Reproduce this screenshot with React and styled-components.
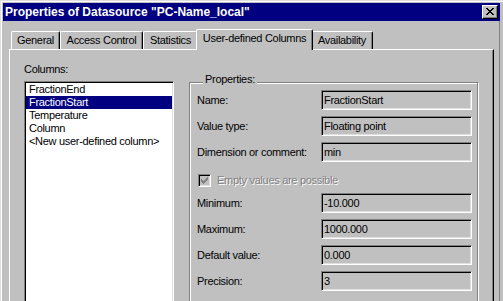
import React from 'react';
import styled, { createGlobalStyle } from 'styled-components';

const GlobalStyle = createGlobalStyle`
  html, body {
    margin: 0;
    padding: 0;
    background: #c0c0c0;
  }
  body {
    font-family: "Liberation Sans", Arial, sans-serif;
    font-size: 11px;
    letter-spacing: -0.3px;
    color: #000;
  }
`;

// Window frame
const Window = styled.div`
  width: 503px;
  height: 301px;
  box-sizing: border-box;
  overflow: hidden;
  background: #c0c0c0;
  border-top: 1px solid #dfdfdf;
  border-left: 1px solid #dfdfdf;
  box-shadow: inset 1px 1px 0 #fff;
  padding: 2px 3px 0 2px;
  display: flex;
  flex-direction: column;
`;

const TitleBar = styled.div`
  height: 18px;
  flex-shrink: 0;
  background: #000080;
  display: flex;
  align-items: center;
  justify-content: space-between;
  padding: 0 2px;
`;

const Title = styled.span`
  color: #fff;
  font-weight: bold;
  font-size: 12px;
  letter-spacing: 0;
  white-space: nowrap;
`;

const CloseButton = styled.div`
  width: 16px;
  height: 14px;
  box-sizing: border-box;
  background: #c0c0c0;
  border: 1px solid;
  border-color: #fff #000 #000 #fff;
  box-shadow: inset -1px -1px 0 #808080;
  display: flex;
  align-items: center;
  justify-content: center;
  padding: 0 1px 1px 0;
`;

const Client = styled.div`
  flex: 1;
  display: flex;
  flex-direction: column;
  border-right: 1px solid #808080;
`;

// Tabs
const TabRow = styled.div`
  display: flex;
  align-items: flex-end;
  height: 20px;
  margin: 8px 0 0 8px;
`;

const Tab = styled.div`
  position: relative;
  z-index: ${p => (p.$active ? 1 : 0)};
  box-sizing: border-box;
  width: ${p => p.$w}px;
  height: ${p => (p.$active ? 21 : 18)}px;
  margin: ${p => (p.$active ? '0 -2px -1px' : '0')};
  background: #c0c0c0;
  border-top: 1px solid #fff;
  border-left: 1px solid #fff;
  border-right: 1px solid #000;
  border-radius: 2px 2px 0 0;
  box-shadow: inset -1px 0 0 #808080;
  padding-top: 2px;
  line-height: 13px;
  text-align: center;
  white-space: nowrap;
`;

const Panel = styled.div`
  flex: 1;
  width: 485px;
  box-sizing: border-box;
  margin-left: 6px;
  border-top: 1px solid #fff;
  border-left: 1px solid #fff;
  border-right: 1px solid #000;
  box-shadow: inset -1px 0 0 #808080;
  padding: 13px 15px 0 14px;
  display: flex;
  align-items: flex-start;
  gap: 15px;
`;

// Left list
const ColumnsPane = styled.div`
  width: 150px;
  display: flex;
  flex-direction: column;
`;

const Label = styled.div`
  line-height: 13px;
  white-space: nowrap;
`;

const ColumnsLabel = styled(Label)`
  margin-bottom: 5px;
`;

const ListBox = styled.div`
  height: 240px;
  box-sizing: border-box;
  background: #fff;
  border: 1px solid;
  border-color: #808080 #fff #fff #808080;
  box-shadow: inset 1px 1px 0 #000, inset -1px -1px 0 #dfdfdf;
  padding: 1px;
`;

const ListItem = styled.div`
  line-height: 13px;
  padding-left: 3px;
  white-space: nowrap;
  background: ${p => (p.$selected ? '#000080' : 'transparent')};
  color: ${p => (p.$selected ? '#fff' : '#000')};
`;

// Properties group
const GroupBox = styled.div`
  width: 289px;
  box-sizing: border-box;
  margin-top: 19px;
  border: 1px solid #808080;
  box-shadow: inset 1px 1px 0 #fff, 1px 1px 0 #fff;
  padding: 0 5px 14px 7px;
  display: flex;
  flex-direction: column;
`;

const GroupTitle = styled.div`
  align-self: flex-start;
  margin: -10px 0 4px 6px;
  padding: 0 2px;
  background: #c0c0c0;
  line-height: 13px;
`;

const FieldRow = styled.div`
  display: grid;
  grid-template-columns: 124px 151px;
  align-items: center;
  height: 20px;
  margin-bottom: 6px;
`;

const Field = styled.div`
  height: 20px;
  box-sizing: border-box;
  background: #c0c0c0;
  border: 1px solid;
  border-color: #808080 #fff #fff #808080;
  box-shadow: inset 1px 1px 0 #000, inset -1px -1px 0 #dfdfdf;
  padding-left: 2px;
  line-height: 18px;
  white-space: nowrap;
`;

const CheckRow = styled.div`
  height: 25px;
  display: flex;
  align-items: center;
  gap: 6px;
  padding-left: 1px;
`;

const CheckBox = styled.div`
  width: 13px;
  height: 13px;
  box-sizing: border-box;
  background: #c0c0c0;
  border: 1px solid;
  border-color: #808080 #fff #fff #808080;
  box-shadow: inset 1px 1px 0 #000, inset -1px -1px 0 #dfdfdf;
  display: flex;
  align-items: center;
  justify-content: center;
`;

const DisabledText = styled.span`
  color: #808080;
  text-shadow: 1px 1px 0 #fff;
  line-height: 13px;
`;

const CLOSE_X = [
  'XX....XX',
  '.XX..XX.',
  '..XXXX..',
  '...XX...',
  '..XXXX..',
  '.XX..XX.',
  'XX....XX',
];

const CHECK = [
  '......X',
  '.....XX',
  'X...XXX',
  'XX.XXX.',
  'XXXXX..',
  '.XXX...',
  '..X....',
];

const PixelIcon = ({ rows, color }) => (
  <svg width={rows[0].length} height={rows.length} shapeRendering="crispEdges">
    {rows.flatMap((row, y) =>
      row.split('').map((c, x) =>
        c === 'X' ? <rect key={`${x}-${y}`} x={x} y={y} width="1" height="1" fill={color} /> : null
      )
    )}
  </svg>
);

const tabs = [
  { label: 'General', w: 49 },
  { label: 'Access Control', w: 83 },
  { label: 'Statistics', w: 55 },
  { label: 'User-defined Columns', w: 117, active: true },
  { label: 'Availability', w: 62 },
];

const columns = ['FractionEnd', 'FractionStart', 'Temperature', 'Column', '<New user-defined column>'];

const topFields = [
  ['Name:', 'FractionStart'],
  ['Value type:', 'Floating point'],
  ['Dimension or comment:', 'min'],
];

const bottomFields = [
  ['Minimum:', '-10.000'],
  ['Maximum:', '1000.000'],
  ['Default value:', '0.000'],
  ['Precision:', '3'],
];

const App = () => (
  <>
    <GlobalStyle />
    <Window>
      <TitleBar>
        <Title>Properties of Datasource "PC-Name_local"</Title>
        <CloseButton>
          <PixelIcon rows={CLOSE_X} color="#000" />
        </CloseButton>
      </TitleBar>
      <Client>
        <TabRow>
          {tabs.map(t => (
            <Tab key={t.label} $w={t.w} $active={t.active}>
              {t.label}
            </Tab>
          ))}
        </TabRow>
        <Panel>
          <ColumnsPane>
            <ColumnsLabel>Columns:</ColumnsLabel>
            <ListBox>
              {columns.map(c => (
                <ListItem key={c} $selected={c === 'FractionStart'}>
                  {c}
                </ListItem>
              ))}
            </ListBox>
          </ColumnsPane>
          <GroupBox>
            <GroupTitle>Properties:</GroupTitle>
            {topFields.map(([label, value]) => (
              <FieldRow key={label}>
                <Label>{label}</Label>
                <Field>{value}</Field>
              </FieldRow>
            ))}
            <CheckRow>
              <CheckBox>
                <PixelIcon rows={CHECK} color="#808080" />
              </CheckBox>
              <DisabledText>Empty values are possible</DisabledText>
            </CheckRow>
            {bottomFields.map(([label, value]) => (
              <FieldRow key={label}>
                <Label>{label}</Label>
                <Field>{value}</Field>
              </FieldRow>
            ))}
          </GroupBox>
        </Panel>
      </Client>
    </Window>
  </>
);

export default App;
